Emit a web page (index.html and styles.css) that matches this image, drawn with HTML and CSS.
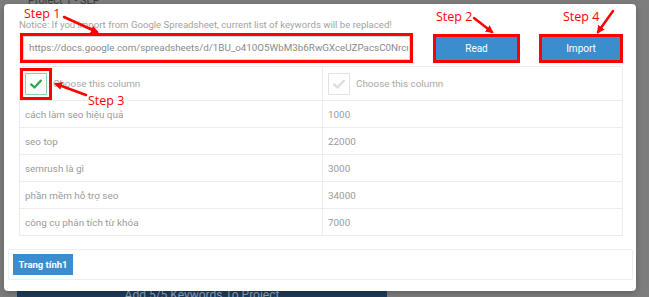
FILE: index.html
```html
<!DOCTYPE html>
<html>
<head>
<meta charset="utf-8">
<link rel="stylesheet" href="styles.css">
</head>
<body>
<div class="page">
  <div class="page-title">Project 1 - SEP</div>
  <div class="page-spacer"></div>
  <div class="page-bottom">
    <div class="add-btn">Add 5/5 Keywords To Project</div>
  </div>
</div>

<div class="modal">
  <div class="modal-body">
    <div class="notice">Notice: If you import from Google Spreadsheet, current list of keywords will be replaced!</div>
    <div class="url-row">
      <div class="url-input marked">https://docs.google.com/spreadsheets/d/1BU_o410O5WbM3b6RwGXceUZPacsC0Nrcı</div>
      <div class="btn btn-read marked">Read</div>
      <div class="btn btn-import marked">Import</div>
    </div>
    <div class="sheet">
      <div class="cell head">
        <span class="check check-on marked-box"><svg viewBox="0 0 16 16" width="14" height="14"><path d="M2.5 8.5 L6.2 12 L13.5 4.2" fill="none" stroke="#2ea84f" stroke-width="2.6" stroke-linecap="round" stroke-linejoin="round"/></svg></span>
        <span class="head-label">Choose this column</span>
      </div>
      <div class="cell head">
        <span class="check check-off"><svg viewBox="0 0 16 16" width="14" height="14"><path d="M2.5 8.5 L6.2 12 L13.5 4.2" fill="none" stroke="#dcdcdc" stroke-width="2.6" stroke-linecap="round" stroke-linejoin="round"/></svg></span>
        <span class="head-label">Choose this column</span>
      </div>
      <div class="cell">cách làm seo hiệu quả</div><div class="cell">1000</div>
      <div class="cell">seo top</div><div class="cell">22000</div>
      <div class="cell">semrush là gì</div><div class="cell">3000</div>
      <div class="cell">phần mềm hỗ trợ seo</div><div class="cell">34000</div>
      <div class="cell">công cụ phân tích từ khóa</div><div class="cell">7000</div>
    </div>
  </div>
  <div class="tabs">
    <div class="tab">Trang tính1</div>
  </div>
</div>

<div class="step step1">Step 1</div>
<div class="step step2">Step 2</div>
<div class="step step3">Step 3</div>
<div class="step step4">Step 4</div>

<svg class="arrows" width="649" height="297" viewBox="0 0 649 297">
  <defs>
    <marker id="ah" markerWidth="8" markerHeight="8" refX="6" refY="4" orient="auto" markerUnits="userSpaceOnUse">
      <path d="M0 0 L8 4 L0 8 Z" fill="#f00"/>
    </marker>
  </defs>
  <g stroke="#f00" stroke-width="2.5" fill="none" stroke-linecap="round">
    <line x1="64" y1="17" x2="97" y2="32" marker-end="url(#ah)"/>
    <line x1="474" y1="18" x2="492" y2="32" marker-end="url(#ah)"/>
    <line x1="613" y1="11" x2="598" y2="32" marker-end="url(#ah)"/>
    <line x1="86" y1="95" x2="56" y2="84" marker-end="url(#ah)"/>
  </g>
</svg>
</body>
</html>
```
FILE: styles.css
```css
* { box-sizing: border-box; }
html, body { margin: 0; padding: 0; }
body {
  width: 649px;
  height: 297px;
  overflow: hidden;
  background: #7d7d7d;
  font-family: Roboto, "Liberation Sans", sans-serif;
  position: relative;
}
.page {
  height: 297px;
  display: flex;
  flex-direction: column;
}
.page-title {
  margin-top: -6px;
  padding-left: 28px;
  font-size: 11px;
  color: #3c3c3c;
  height: 10px;
}
.page-spacer { flex: 1; }
.page-bottom {
  padding-left: 17px;
}
.add-btn {
  width: 370px;
  height: 6px;
  background: #1f3b58;
  color: #8fa3b8;
  font-size: 12px;
  line-height: 8px;
  text-align: center;
  overflow: hidden;
}
.modal {
  position: absolute;
  left: 4px;
  top: 4px;
  width: 632px;
  height: 287px;
  background: #fff;
  border-radius: 4px;
  box-shadow: 0 2px 6px rgba(0,0,0,0.25);
  display: flex;
  flex-direction: column;
}
.modal-body {
  padding: 14px 14px 0 15px;
}
.notice {
  font-size: 9.6px;
  color: #a3a3a3;
  line-height: 13px;
  height: 13px;
  white-space: nowrap;
}
.url-row {
  margin-top: 5px;
  display: flex;
  align-items: center;
  height: 24px;
}
.url-input {
  margin-left: 4px;
  width: 387px;
  height: 24px;
  border: 1px solid #d6d6d6;
  font-size: 9.8px;
  color: #8a8a8a;
  line-height: 22px;
  padding-left: 5px;
  white-space: nowrap;
  overflow: hidden;
}
.marked {
  outline: 3px solid #f00;
}
.btn {
  height: 23px;
  background: #3b8dce;
  color: #fff;
  font-size: 10px;
  line-height: 23px;
  text-align: center;
}
.btn-read { margin-left: 26px; width: 81px; }
.btn-import { margin-left: 25px; width: 78px; }
.sheet {
  margin-top: 6px;
  width: 603px;
  display: grid;
  grid-template-columns: 303px 300px;
  grid-template-rows: 34px;
  grid-auto-rows: 27px;
  border-top: 1px solid #e9edf0;
  border-left: 1px solid #e9edf0;
}
.cell {
  border-right: 1px solid #e9edf0;
  border-bottom: 1px solid #e9edf0;
  font-size: 9.9px;
  color: #9a9a9a;
  padding-left: 5px;
  display: flex;
  align-items: center;
  white-space: nowrap;
}
.check {
  width: 22px;
  height: 22px;
  border: 1px solid #e2e2e2;
  display: inline-flex;
  align-items: center;
  justify-content: center;
  flex: none;
}
.check-on {
  border-color: #8fd3a0;
}
.marked-box {
  outline: 3px solid #f00;
  outline-offset: 2px;
}
.head-label {
  margin-left: 6px;
  font-size: 9.9px;
  color: #a8a8a8;
}
.tabs {
  margin: 13px 3px 0 4px;
  height: 31px;
  border: 1px solid #eeeeee;
  border-radius: 2px;
  padding: 3px 0 0 4px;
}
.tab {
  display: inline-block;
  width: 60px;
  height: 21px;
  background: #3b8dce;
  color: #fff;
  font-size: 9.5px;
  font-weight: bold;
  line-height: 21px;
  text-align: center;
}
.step {
  position: absolute;
  font-family: "Open Sans", "DejaVu Sans", sans-serif;
  font-size: 12.5px;
  color: #f00;
  line-height: 14px;
}
.step1 { left: 24px; top: 7px; }
.step2 { left: 436px; top: 10px; }
.step3 { left: 88px; top: 94px; }
.step4 { left: 563px; top: 10px; }
.arrows {
  position: absolute;
  left: 0;
  top: 0;
  pointer-events: none;
}
```
